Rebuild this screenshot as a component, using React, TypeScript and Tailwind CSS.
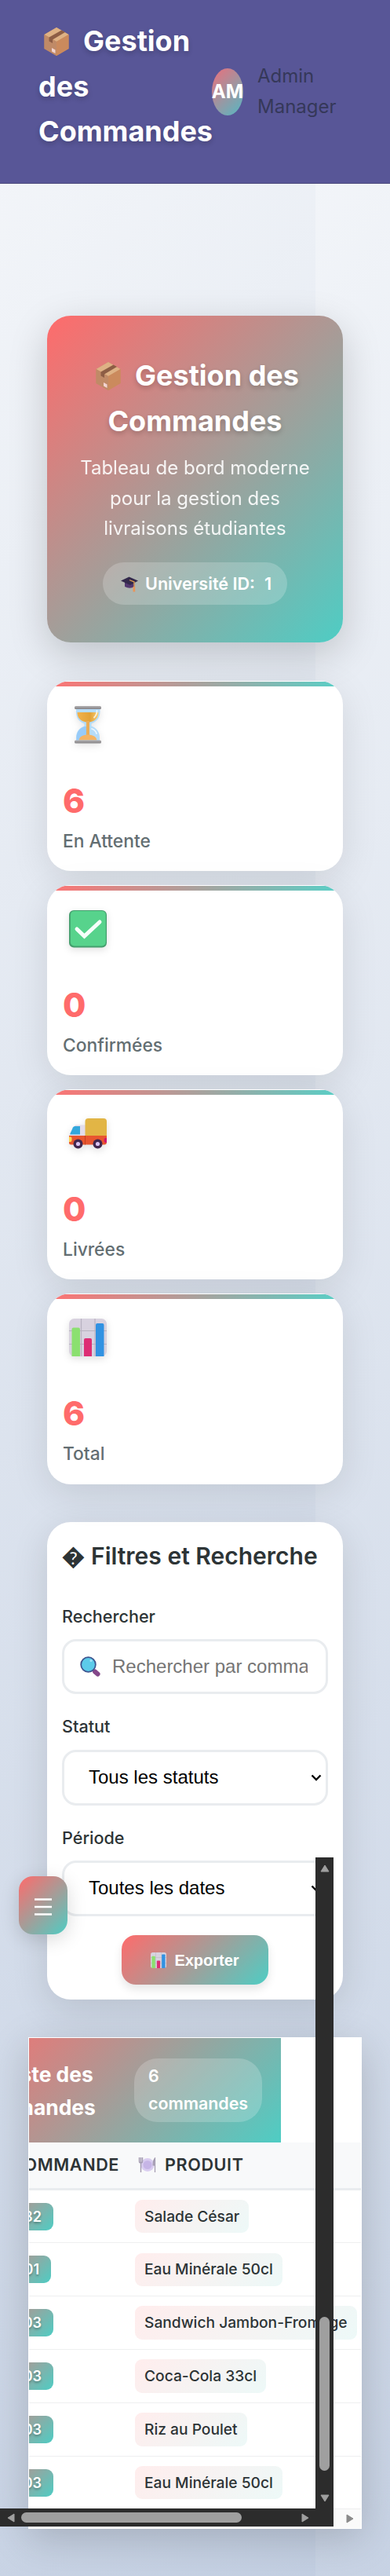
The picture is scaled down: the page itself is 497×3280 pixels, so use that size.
import React from "react";

const products: [string, string][] = [
  ["CMD-2032", "Salade César"],
  ["CMD-2001", "Eau Minérale 50cl"],
  ["CMD-2003", "Sandwich Jambon-Fromage"],
  ["CMD-2003", "Coca-Cola 33cl"],
  ["CMD-2003", "Riz au Poulet"],
  ["CMD-2003", "Eau Minérale 50cl"],
];

function Box({ className }: { className: string }) {
  return (
    <svg viewBox="0 0 32 36" className={className}>
      <path d="M16 0 31.500 9v18L16 36 .5 27V9z" fill="#c98d62" />
      <path d="M16 0 31.500 9 16 18 .5 9z" fill="#deb185" />
      <path d="M.5 9 16 18v18L.5 27z" fill="#c08a67" />
      <path d="M16 18 31.500 9v18L16 36z" fill="#cb8a5d" />
      <path d="m6.500 12.500 16-9 4.500 2.600-16 9.400V20l-4.500-2.500z" fill="#8d5d45" />
      <path d="m10 26 4.500 2.500v4.500L10 30.500z" fill="#f2d3d0" />
    </svg>
  );
}

function Hourglass() {
  return (
    <svg viewBox="0 0 48 48" className="h-12 w-12 drop-shadow-[0_3px_5px_rgba(0,0,0,0.1)]">
      <defs>
        <linearGradient id="sand" x1="0" y1="0" x2="1" y2="0">
          <stop offset="0" stopColor="#f2b24c" />
          <stop offset=".6" stopColor="#e2a238" />
          <stop offset="1" stopColor="#f7cf78" />
        </linearGradient>
        <linearGradient id="rim" x1="0" y1="0" x2="0" y2="1">
          <stop offset="0" stopColor="#b0aeb0" />
          <stop offset="1" stopColor="#858386" />
        </linearGradient>
      </defs>
      <path d="M9 3h30.500v4c0 9-5 13-11 15.500v3C35 28 39 33 39 40v4H9v-4c0-7 4-12 10.500-14.500v-3C13 20 9 16 9 7z" fill="#b5dcfa" />
      <path d="M9.500 40c0-7 4-12 10.500-14l2 0v13l-9 4H9.500z" fill="#98cbf8" />
      <path d="M10.500 8h27c0 7-4 11-11 12.500h-5C14.500 19 10.500 15 10.500 8z" fill="url(#sand)" />
      <path d="M22 19h4v20h-4z" fill="#e9ad58" />
      <path d="M12.500 43.500c1-5 5.500-7 11.500-7s10.500 2 11.500 7z" fill="#f4b464" />
      <path d="M35.500 6c0 4-1 6-3.500 8.500M29 29c3 1 5 3 6 6" stroke="#fff" strokeWidth="1.800" strokeLinecap="round" fill="none" opacity=".75" />
      <rect x="7" y="0" width="34" height="4" rx="1.500" fill="url(#rim)" />
      <rect x="7" y="43.500" width="34" height="4" rx="1.500" fill="url(#rim)" />
    </svg>
  );
}

function Check() {
  return (
    <svg viewBox="0 0 48 48" className="h-12 w-12 drop-shadow-[0_3px_5px_rgba(0,0,0,0.12)]">
      <rect width="48" height="47.500" rx="6" fill="#459f6e" />
      <rect x="1.800" y="1" width="45" height="44.500" rx="5" fill="#57d38c" />
      <path d="m10 24 9.500 9L39 15" stroke="#f5fffa" strokeWidth="5" strokeLinecap="round" strokeLinejoin="miter" fill="none" />
    </svg>
  );
}

function Truck() {
  return (
    <svg viewBox="0 0 48 48" className="mt-[5px] h-12 w-12 drop-shadow-[0_3px_5px_rgba(0,0,0,0.12)]">
      <path d="M8 8.500h13V24H0v-2z" fill="#e3dcea" />
      <path d="M7.500 10H14v10.500H2q-1 0-.6-1L5 11.500Q5.700 10 7.500 10z" fill="#33a7dc" />
      <path d="M0 22h48v8q0 3.500-3 3.500H2.500Q0 33.500 0 31z" fill="#e8562f" />
      <path d="M20.500 4q0-4 4-4H44q4 0 4 4v18H20.500z" fill="#e2b545" />
      <path d="M20.500 22v11.500" stroke="#c2401f" strokeWidth="1" />
      <path d="M0 23.500h2q1.500 0 1.500 2V28q0 2-2 2H0z" fill="#ffd84f" />
      <path d="M48 25h-1.500q-2 0-2 3t2 3H48z" fill="#d3186a" />
      <circle cx="11.500" cy="32.500" r="6" fill="#41274f" />
      <circle cx="11.500" cy="32.500" r="2.600" fill="#d9c3f3" />
      <circle cx="36.500" cy="32.500" r="6" fill="#41274f" />
      <circle cx="36.500" cy="32.500" r="2.600" fill="#d9c3f3" />
    </svg>
  );
}

function Chart({ className }: { className: string }) {
  return (
    <svg viewBox="0 0 48 48" className={className}>
      <rect width="48" height="48" rx="6.500" fill="#d8d2df" />
      <path d="M15.500 0v48M33 0v48M0 15.500h48M0 32.500h48" stroke="#b8b2c0" strokeWidth="1.200" />
      <path d="M3.500 13.500q0-2 2-2H12q2 0 2 2V48H3.500z" fill="#8be070" />
      <path d="M19 27q0-2 2-2h6q2 0 2 2v21H19z" fill="#dd2e74" />
      <path d="M34 8q0-2 2-2h6.500q2 0 2 2v40H34z" fill="#3192e2" />
    </svg>
  );
}

function Cap() {
  return (
    <svg viewBox="0 0 22 20" className="mt-0.5 h-5 w-[22px]">
      <path d="M5 7h12.500v6q-6 3.500-12.500 0z" fill="#53386f" />
      <path d="M0 5.500 10.500.5 22 5.500 12 11z" fill="#33294b" />
      <path d="m11 4.500 6 2.500v7" stroke="#e8a552" strokeWidth="1.300" fill="none" />
      <path d="M15.500 13h2.700v6.500h-2.700z" fill="#e8955a" />
    </svg>
  );
}

function Plate() {
  return (
    <svg viewBox="0 0 24 20" className="h-5 w-6">
      <circle cx="12" cy="9.500" r="8.500" fill="#d9cdf0" />
      <circle cx="12" cy="9.500" r="5.500" fill="#c6b5e6" />
      <path d="M1.500 0v5q0 2 2 2t2-2V0M3.500 0v19" stroke="#a39bb0" strokeWidth="1.400" fill="none" />
      <path d="M21.500 19V1q-2.500 3-2.300 9h2.300" stroke="#a39bb0" strokeWidth="1.200" fill="#b3abc0" />
    </svg>
  );
}

function Magnifier() {
  return (
    <svg viewBox="0 0 26 26" className="h-[26px] w-[26px]">
      <path d="m19 19.500 3.500 3" stroke="#84478a" strokeWidth="6" strokeLinecap="round" />
      <circle cx="10.500" cy="10.500" r="9.300" fill="#5ccbea" stroke="#3d5590" strokeWidth="1.800" />
      <circle cx="14" cy="5.500" r="1.500" fill="#a5e5fa" />
    </svg>
  );
}

function StatCard({ icon, value, label }: { icon: React.ReactNode; value: number; label: string }) {
  return (
    <div className="h-[242.3px] overflow-hidden rounded-[30px] bg-white pt-px shadow-[0_12px_48px_rgba(0,0,0,0.1)]">
      <div className="h-1.5 bg-[linear-gradient(90deg,#ff6b6b,#4ecdc4)] opacity-95" />
      <div className="pl-5">
        <div className="flex h-[85px] items-start pt-[25px] pl-2">{icon}</div>
        <div className="mt-[35px] text-[42.5px] leading-[52px] font-extrabold text-[#ff6b6b]">{value}</div>
        <div className="mt-[7px] text-[22.8px] leading-[36px] font-medium text-[#636e72]">{label}</div>
      </div>
    </div>
  );
}

function SelectBox({ children }: { children: string }) {
  return (
    <div className="flex h-[71px] items-center justify-between rounded-[18px] border-[3px] border-[#e9ecef] bg-white pr-[5px] pl-[31px] font-['Liberation_Sans',sans-serif] text-2xl text-black">
      <span>{children}</span>
      <svg viewBox="0 0 14 9" className="h-[9px] w-[14px]">
        <path d="m1.500 1.500 5.500 5.500 5.500-5.500" stroke="#000" strokeWidth="2.400" fill="none" />
      </svg>
    </div>
  );
}

export default function App() {
  return (
    <div className="relative h-[3280px] w-[497px] overflow-hidden bg-[linear-gradient(135deg,#f5f7fa_0%,#c3cfe2_100%)] bg-[length:402px_100%] font-['Inter','Liberation_Sans',sans-serif] text-[#2d3436]">
      <header className="flex h-[234px] items-center border-b border-[#4d4b7c] bg-[#585697] pl-[49px]">
        <h1 className="-mt-3 w-[221px] shrink-0 text-4xl leading-[57.6px] font-bold text-white [text-shadow:0_3px_6px_rgba(0,0,0,0.2)]">
          <Box className="mr-[18px] ml-[7px] inline-block h-9 w-8 align-[-5.5px]" />
          Gestion
          <br />
          des
          <br />
          Commandes
        </h1>
        <div className="flex h-[60px] w-10 shrink-0 items-center justify-center rounded-[50%] bg-[linear-gradient(135deg,#ed6f7b,#54b9c4)] text-2xl font-bold text-white">
          AM
        </div>
        <div className="ml-[18px] w-28 text-2xl leading-[38.4px] text-[#353859]">Admin Manager</div>
      </header>

      <main className="px-[60px] pt-[168px]">
        <section className="flex h-[416px] flex-col items-center rounded-[30px] bg-[linear-gradient(135deg,#ff6b6b_0%,#4ecdc4_100%)] pt-[48px] text-center text-white shadow-[0_15px_50px_rgba(0,0,0,0.18)]">
          <h2 className="text-4xl leading-[57.6px] font-bold [text-shadow:0_3px_6px_rgba(0,0,0,0.2)]">
            <Box className="mr-[18px] ml-1.5 inline-block h-9 w-8 align-[-5.5px]" />
            Gestion des
            <br />
            Commandes
          </h2>
          <p className="mt-3 text-2xl leading-[38.4px] opacity-90">
            Tableau de bord moderne
            <br />
            pour la gestion des
            <br />
            livraisons étudiantes
          </p>
          <div className="mt-6 flex h-[54px] w-[235px] items-center rounded-full bg-white/20 pl-[23px] text-[21.6px] font-semibold">
            <Cap />
            <span className="ml-[9px]">Université ID:</span>
            <span className="ml-3">1</span>
          </div>
        </section>

        <section className="mt-[48.5px] flex flex-col gap-[18px]">
          <StatCard icon={<Hourglass />} value={6} label="En Attente" />
          <StatCard icon={<Check />} value={0} label="Confirmées" />
          <StatCard icon={<Truck />} value={0} label="Livrées" />
          <StatCard icon={<Chart className="h-12 w-12 drop-shadow-[0_3px_5px_rgba(0,0,0,0.12)]" />} value={6} label="Total" />
        </section>

        <section className="mt-12 h-[608px] rounded-[30px] bg-white px-[19px] pt-[21px] shadow-[0_12px_48px_rgba(0,0,0,0.12)]">
          <h3 className="flex h-[46px] items-center text-[30px] font-semibold whitespace-nowrap">
            <span className="mr-2 text-[28.8px]">�</span>Filtres et Recherche
          </h3>
          <div className="mt-[36px] mb-[11px] text-[21.6px] leading-[35px] font-medium">Rechercher</div>
          <div className="flex h-[70px] items-center overflow-hidden rounded-[18px] border-[3px] border-[#e9ecef] pr-[23px] pl-5 font-['Liberation_Sans',sans-serif] text-2xl text-[#757575]">
            <span className="shrink-0"><Magnifier /></span>
            <span className="ml-[15px] overflow-hidden whitespace-nowrap">Rechercher par commande</span>
          </div>
          <div className="mt-[24px] mb-[12px] text-[21.6px] leading-[35px] font-medium">Statut</div>
          <SelectBox>Tous les statuts</SelectBox>
          <div className="mt-[24px] mb-[11px] text-[21.6px] leading-[35px] font-medium">Période</div>
          <SelectBox>Toutes les dates</SelectBox>
          <button className="mx-auto mt-6 flex h-[63px] w-[187px] items-center justify-center rounded-[18px] bg-[linear-gradient(135deg,#ff6b6b_0%,#4ecdc4_100%)] pt-px font-['Liberation_Sans',sans-serif] text-xl font-bold text-white shadow-[0_6px_12px_rgba(0,0,0,0.1)]">
            <Chart className="mr-2.5 h-5 w-5" />
            Exporter
          </button>
        </section>
      </main>

      <section className="mt-12 ml-9 h-[626px] w-[425px] overflow-hidden border border-white bg-white shadow-[0_12px_48px_rgba(0,0,0,0.18)]">
        <div className="-ml-[102px] w-[525px]">
          <div className="flex h-[133px] w-[423px] items-center justify-between bg-[linear-gradient(135deg,#ff6b6b_0%,#4ecdc4_100%)] px-6 text-white">
            <div className="pt-0.5 text-right text-[26.4px] leading-[42.5px] font-bold whitespace-nowrap">
              <span className="mr-[3px]">Liste des</span>
              <br />
              Commandes
            </div>
            <div className="flex h-[81px] w-[163px] items-center rounded-[30px] bg-white/20 pl-[18px] text-[21.4px] leading-[35px] font-semibold">
              <span>
                6<br />
                commandes
              </span>
            </div>
          </div>
          <div className="flex h-[61px] items-center border-b-[3px] border-[#e9ecef] bg-[#f8f9fa] text-[21.6px] font-semibold tracking-[0.6px]">
            <span className="flex w-[217px] shrink-0 justify-end">COMMANDE</span>
            <span className="mr-[10px] ml-6"><Plate /></span>
            PRODUIT
          </div>
          {products.map(([id, name], i) => (
            <div key={i} className="flex h-[67.8px] items-center border-b border-[#eeeff0] pl-6">
              <div className="w-[213px] shrink-0">
                <span
                  className={`flex h-[35px] items-center justify-end rounded-[9px] bg-[linear-gradient(135deg,#ff6b6b_0%,#4ecdc4_100%)] pr-[15px] text-[18px] font-semibold whitespace-nowrap text-white [text-shadow:0_2px_3px_rgba(0,0,0,0.3)] ${i === 1 ? "w-[106px]" : "w-[109px]"}`}
                >
                  {id}
                </span>
              </div>
              <div className="flex h-[42.5px] shrink-0 items-center rounded-[9px] bg-[linear-gradient(135deg,#ffeded_0%,#edf9f8_100%)] px-3 text-[19.2px] font-medium">
                {name}
              </div>
            </div>
          ))}
        </div>
        <div className="flex h-6 items-center justify-end bg-[#fafafa] pr-[9px]">
          <svg viewBox="0 0 10 12" className="h-3 w-2.5"><path d="M1 1v10l8-5z" fill="#8b8b8b" stroke="#8b8b8b" strokeLinejoin="round" /></svg>
        </div>
      </section>

      <button className="absolute top-[2389px] left-6 flex h-[74px] w-[62px] items-center justify-center rounded-[18px] bg-[linear-gradient(135deg,#ff6b6b_0%,#4ecdc4_100%)] shadow-[0_6px_24px_rgba(0,0,0,0.15)]">
        <svg viewBox="0 0 22 22" className="mt-1 h-[22px] w-[22px]"><path d="M0 1.500h22M0 11h22M0 20.500h22" stroke="#fff" strokeWidth="2.500" /></svg>
      </button>

      <div className="absolute top-[2365px] left-[402px] flex h-[829px] w-[23px] flex-col items-center bg-[#2c2c2c] pt-[9px]">
        <svg viewBox="0 0 12 10" className="h-2.5 w-3"><path d="M6 1 1 9h10z" fill="#9f9f9f" stroke="#9f9f9f" strokeLinejoin="round" /></svg>
        <div className="mt-[566px] h-[196px] w-[13px] rounded-full bg-[#9f9f9f]" />
        <svg viewBox="0 0 12 10" className="mt-[30px] h-2.5 w-3"><path d="M6 9 1 1h10z" fill="#9f9f9f" stroke="#9f9f9f" strokeLinejoin="round" /></svg>
      </div>
      <div className="absolute top-[3194px] left-0 flex h-[23px] w-[425px] items-center bg-[#2c2c2c] pl-[9px]">
        <svg viewBox="0 0 10 12" className="h-3 w-2.5"><path d="M9 1v10L1 6z" fill="#9f9f9f" stroke="#9f9f9f" strokeLinejoin="round" /></svg>
        <div className="ml-2 h-[13px] w-[281px] rounded-full bg-[#9f9f9f]" />
        <svg viewBox="0 0 10 12" className="ml-[76px] h-3 w-2.5"><path d="M1 1v10l8-5z" fill="#9f9f9f" stroke="#9f9f9f" strokeLinejoin="round" /></svg>
      </div>
    </div>
  );
}
